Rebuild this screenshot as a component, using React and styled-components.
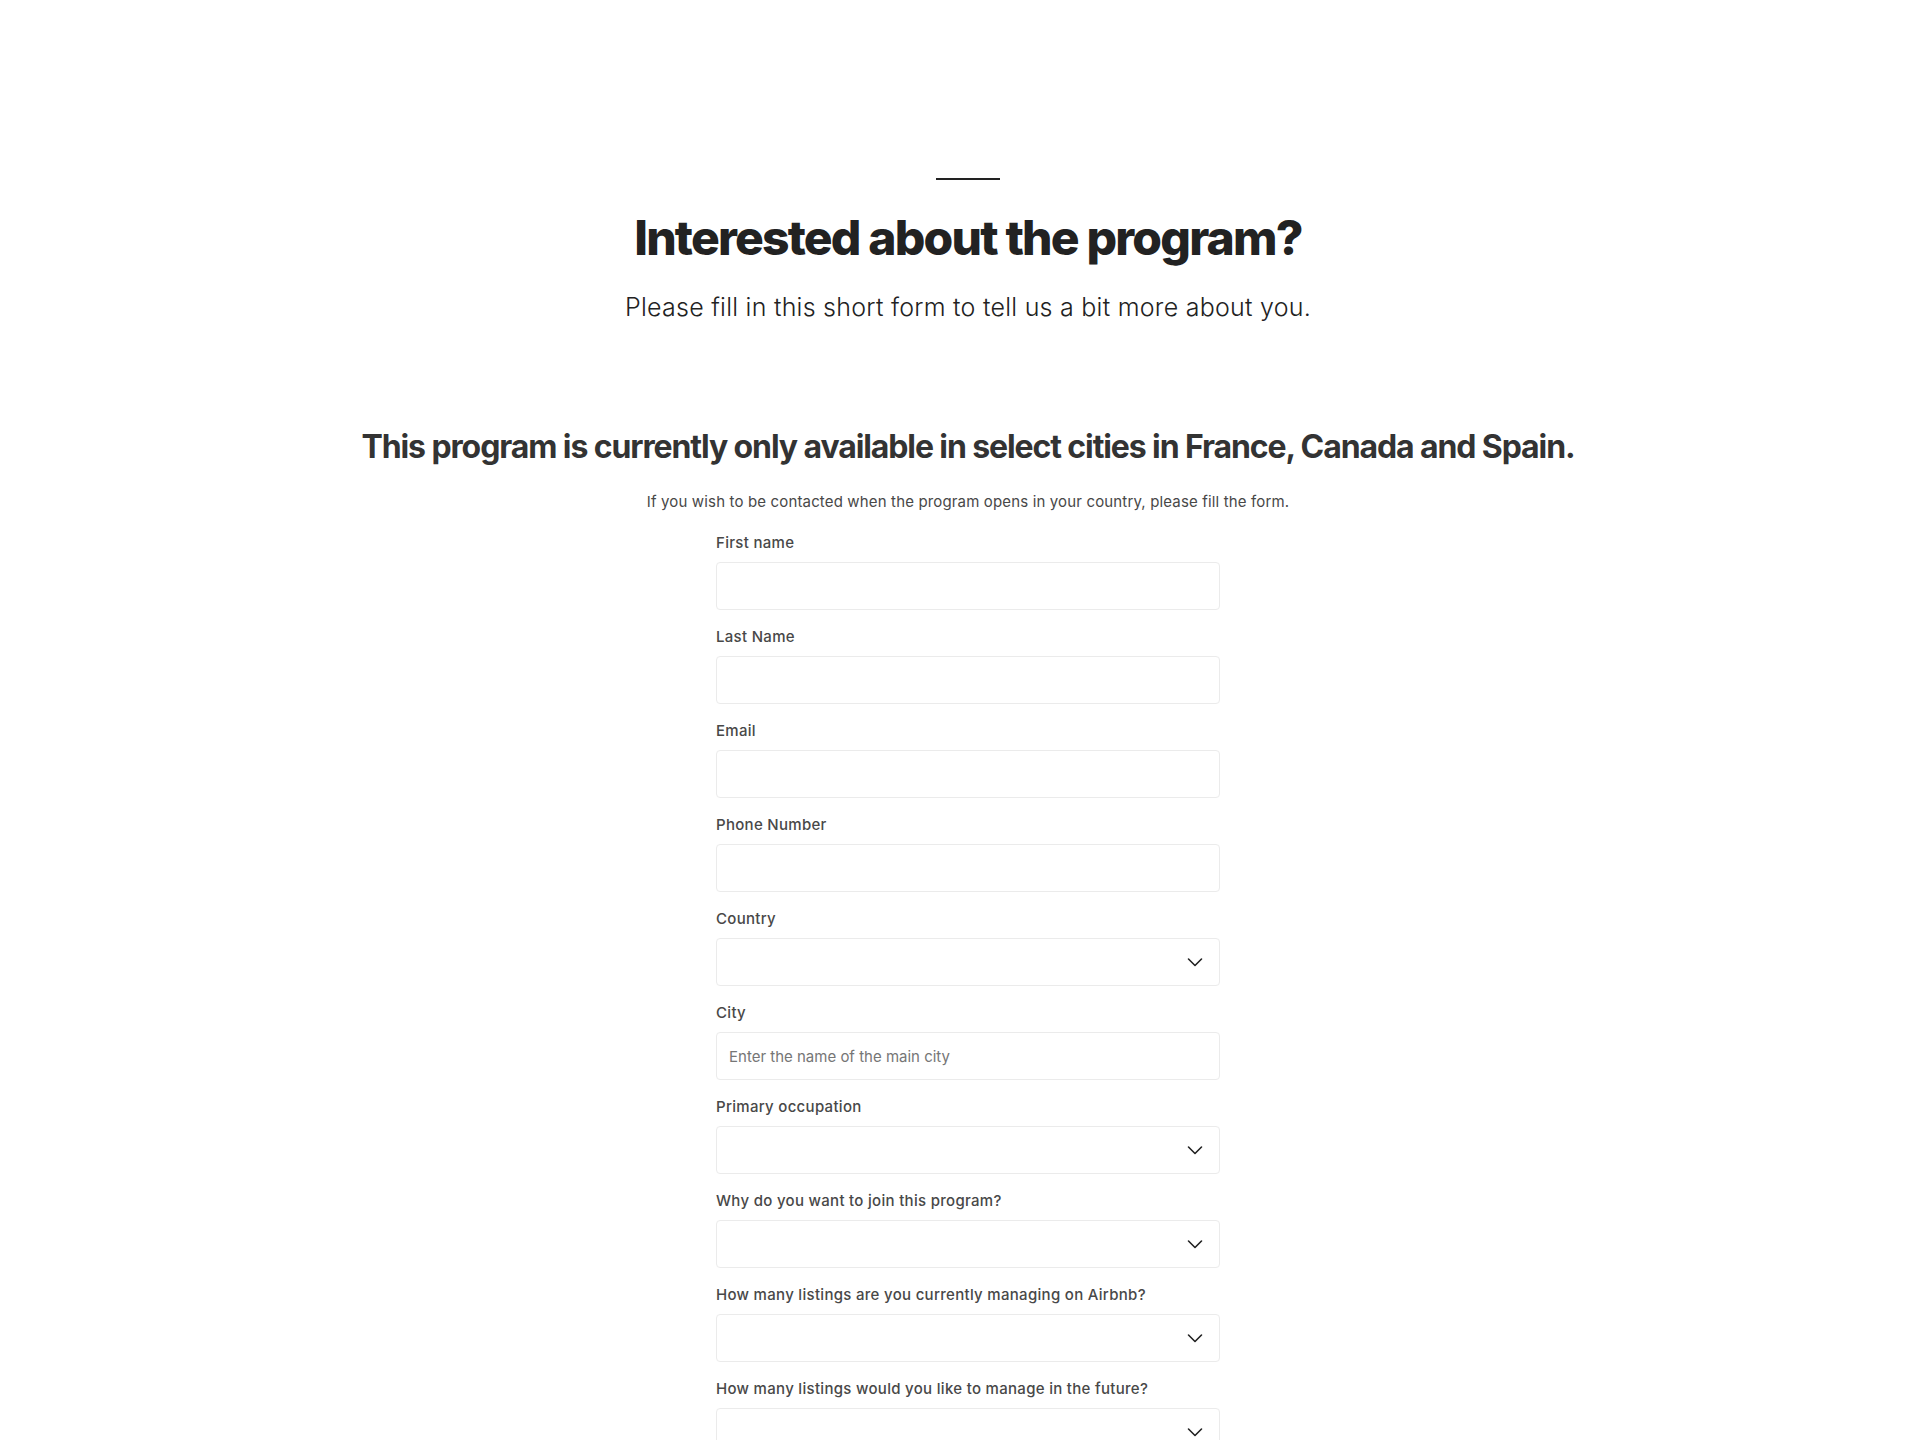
import styled, { createGlobalStyle } from "styled-components";

const GlobalStyle = createGlobalStyle`
  body {
    margin: 0;
    background: #ffffff;
    font-family: Inter, "Noto Sans", sans-serif;
    color: #222222;
  }
  * {
    box-sizing: border-box;
  }
`;

const fields = [
  { label: "First name", type: "text" },
  { label: "Last Name", type: "text" },
  { label: "Email", type: "text" },
  { label: "Phone Number", type: "text" },
  { label: "Country", type: "select" },
  { label: "City", type: "text", placeholder: "Enter the name of the main city" },
  { label: "Primary occupation", type: "select" },
  { label: "Why do you want to join this program?", type: "select" },
  { label: "How many listings are you currently managing on Airbnb?", type: "select" },
  { label: "How many listings would you like to manage in the future?", type: "select" },
];

function ChevronIcon() {
  return (
    <svg width="16" height="16" viewBox="0 0 16 16" fill="none">
      <path
        d="M1.5 5l6.5 6.5L14.5 5"
        stroke="#222222"
        strokeWidth="1.6"
        strokeLinecap="round"
        strokeLinejoin="round"
      />
    </svg>
  );
}

function Field({ label, type, placeholder }) {
  return (
    <FieldRow>
      <Label>{label}</Label>
      {type === "select" ? (
        <SelectBox>
          <ChevronIcon />
        </SelectBox>
      ) : (
        <TextInput placeholder={placeholder || ""} />
      )}
    </FieldRow>
  );
}

export default function App() {
  return (
    <Page>
      <GlobalStyle />
      <Hero>
        <Divider />
        <Title>Interested about the program?</Title>
        <Subtitle>Please fill in this short form to tell us a bit more about you.</Subtitle>
      </Hero>
      <Notice>This program is currently only available in select cities in France, Canada and Spain.</Notice>
      <Hint>If you wish to be contacted when the program opens in your country, please fill the form.</Hint>
      <Form>
        {fields.map((f) => (
          <Field key={f.label} {...f} />
        ))}
      </Form>
    </Page>
  );
}

const Page = styled.div`
  display: flex;
  flex-direction: column;
  align-items: center;
  padding: 178px 0 80px 16px;
`;

const Hero = styled.div`
  display: flex;
  flex-direction: column;
  align-items: center;
`;

const Divider = styled.div`
  width: 64px;
  height: 2px;
  background: #222222;
`;

const Title = styled.h1`
  margin: 30px 0 0;
  font-size: 48px;
  line-height: 56px;
  font-weight: 800;
  letter-spacing: -1.8px;
  color: #222222;
`;

const Subtitle = styled.p`
  margin: 25px 0 0;
  font-size: 25px;
  line-height: 32px;
  font-weight: 300;
  letter-spacing: 0.25px;
  color: #222222;
`;

const Notice = styled.h2`
  margin: 104px 0 0;
  font-size: 32px;
  line-height: 40px;
  font-weight: 700;
  letter-spacing: -1.1px;
  color: #333333;
`;

const Hint = styled.p`
  margin: 25px 0 0;
  font-size: 15px;
  line-height: 20px;
  font-weight: 400;
  letter-spacing: 0.15px;
  color: #484848;
`;

const Form = styled.form`
  width: 504px;
  margin-top: 21px;
  display: flex;
  flex-direction: column;
`;

const FieldRow = styled.div`
  display: flex;
  flex-direction: column;
  margin-bottom: 17px;
`;

const Label = styled.label`
  font-size: 15px;
  line-height: 20px;
  font-weight: 500;
  letter-spacing: 0.3px;
  color: #484848;
  margin-bottom: 9px;
`;

const TextInput = styled.input`
  width: 100%;
  height: 48px;
  border: 1px solid #ebebeb;
  border-radius: 4px;
  padding: 0 12px;
  font-family: inherit;
  font-size: 15px;
  color: #222222;
  outline: none;
  &::placeholder {
    color: #767676;
  }
`;

const SelectBox = styled.div`
  height: 48px;
  border: 1px solid #ebebeb;
  border-radius: 4px;
  display: flex;
  align-items: center;
  justify-content: flex-end;
  padding-right: 16px;
  cursor: pointer;
`;
